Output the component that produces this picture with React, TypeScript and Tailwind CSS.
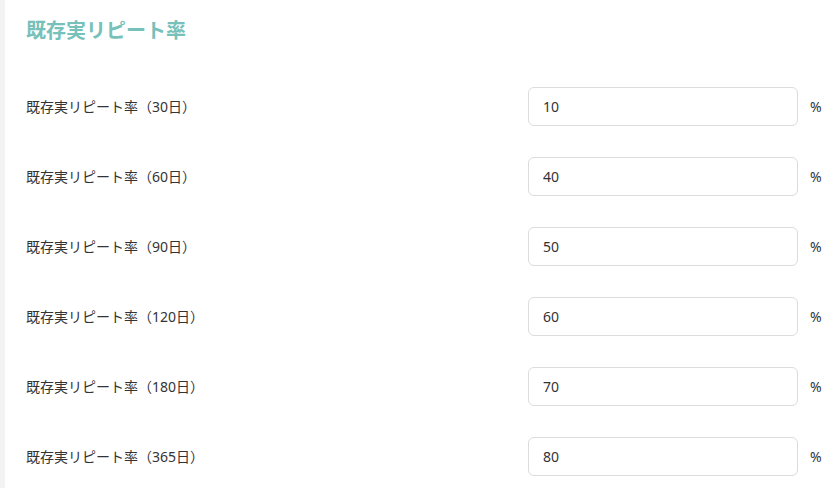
const rows = [
  ["30", "10"],
  ["60", "40"],
  ["90", "50"],
  ["120", "60"],
  ["180", "70"],
  ["365", "80"]
];

export default function App() {
  return (
    <div className="flex h-[488px] w-[840px] overflow-hidden bg-white font-['Noto_Sans','Noto_Sans_CJK_JP',sans-serif] text-[#333]">
      <div className="w-[5px] shrink-0 bg-[#f3f3f3]" />
      <div className="flex-1 pl-[21px]">
        <div className="flex h-[71px] items-start pt-[16px]">
          <h2 className="text-[20px] font-bold leading-[30px] text-[#76c1b9]">既存実リピート率</h2>
        </div>
        {rows.map(([days, value]) => (
          <div key={days} className="flex h-[70px] items-center">
            <label className="w-[502px] shrink-0 text-[14px]">既存実リピート率（{days}日）</label>
            <input
              defaultValue={value}
              className="h-[39px] w-[270px] rounded-[6px] border border-[#dcdcdc] bg-white px-[14px] text-[14px] text-[#333] outline-none"
            />
            <span className="ml-[12px] text-[14px]">%</span>
          </div>
        ))}
      </div>
    </div>
  );
}
